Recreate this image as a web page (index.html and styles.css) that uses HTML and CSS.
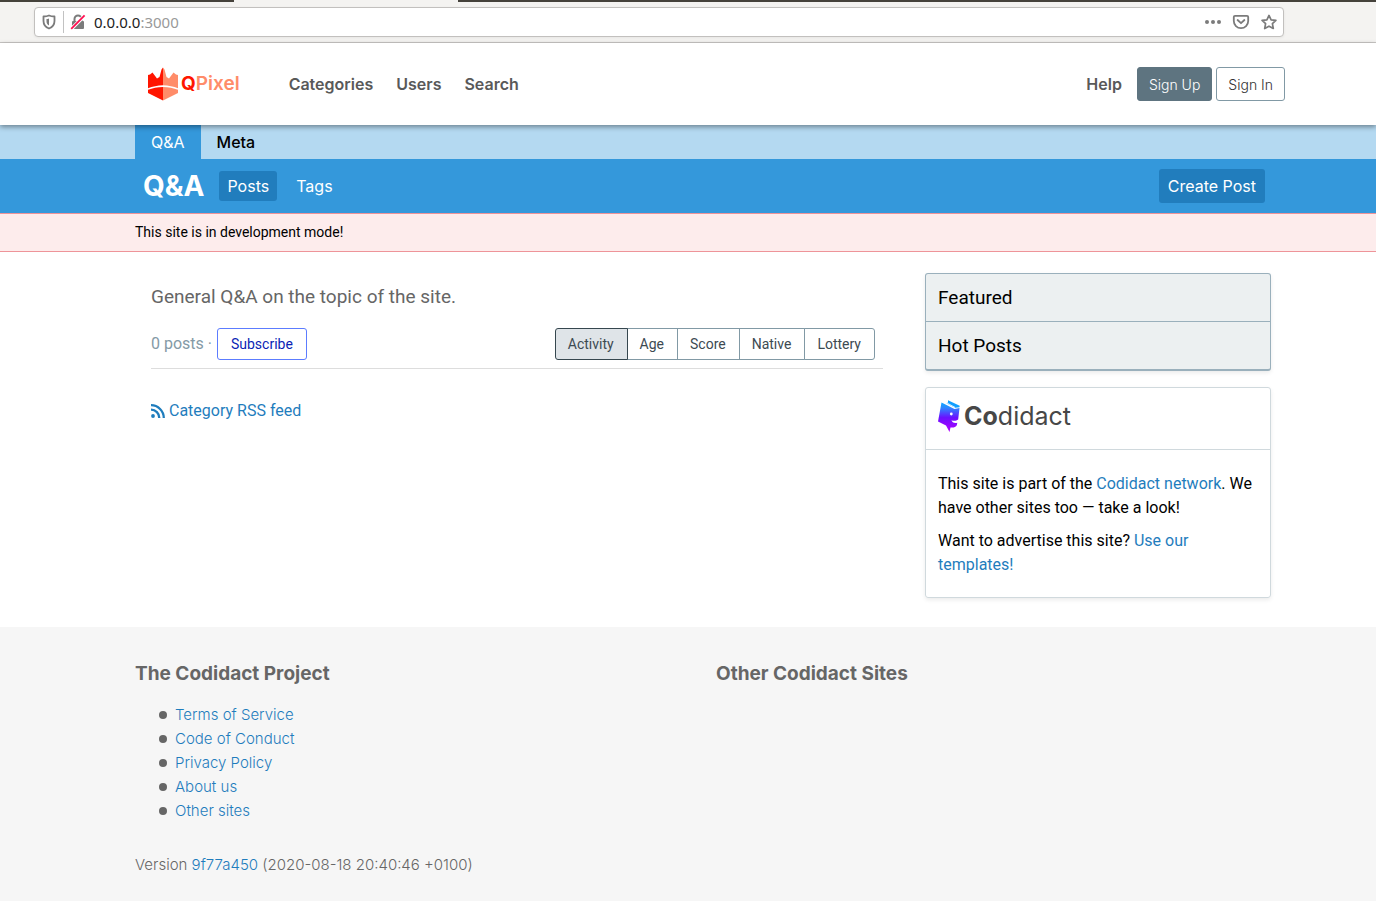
FILE: index.html
```html
<!DOCTYPE html>
<html lang="en">
<head>
<meta charset="utf-8">
<title>Q&amp;A - QPixel</title>
<meta name="viewport" content="width=device-width, initial-scale=1">
<link rel="stylesheet" href="styles.css">
</head>
<body>
<div class="browser">
  <div class="tabstrip"><span class="tabstrip-left"></span><span class="tabstrip-active"></span><span class="tabstrip-right"></span></div>
  <div class="urlbar">
    <svg class="shield" width="14" height="16" viewBox="0 0 14 16"><path d="M7 1.500C5.200 2.300 3.300 2.500 1.500 2.500V7c0 3.500 2 6.200 5.500 7.500C10.500 13.200 12.500 10.500 12.500 7V2.500C10.700 2.500 8.800 2.300 7 1.500z" fill="none" stroke="#7b7b7b" stroke-width="1.800" stroke-linejoin="round"/><path d="M7 4.500c-1 .4-1.700.5-2.500.6V7.500c0 1.700.8 3 2.500 4z" fill="#7b7b7b"/></svg>
    <span class="urlbar-rule"></span>
    <svg class="lock" width="16" height="16" viewBox="0 0 16 16"><rect x="2" y="7" width="12" height="8" rx="1" fill="#7b7b7b"/><path d="M4.500 7V5a3.500 3.500 0 0 1 7 0v2" fill="none" stroke="#7b7b7b" stroke-width="2"/><path d="M1 15.200L14.800 1.400" stroke="#fff" stroke-width="3.600"/><path d="M1.200 14.800L14.600 1.400" stroke="#ff0d4f" stroke-width="1.800"/></svg>
    <span class="url"><span class="host">0.0.0.0</span>:3000</span>
    <svg class="more" width="18" height="16" viewBox="0 0 18 16" fill="#7b7b7b"><circle cx="3" cy="8" r="2"/><circle cx="9" cy="8" r="2"/><circle cx="15" cy="8" r="2"/></svg>
    <svg class="pocket" width="18" height="16" viewBox="0 0 18 16" fill="none" stroke="#7b7b7b" stroke-width="1.800" stroke-linejoin="round" stroke-linecap="round"><path d="M3 1.900h12a1.200 1.200 0 0 1 1.200 1.200V7a7.200 7.200 0 0 1-14.400 0V3.100A1.200 1.200 0 0 1 3 1.900z"/><path d="M5.600 6L9 9.200 12.400 6"/></svg>
    <svg class="star" width="16" height="16" viewBox="0 0 16 16"><path d="M8 1.400l2.100 4.400 4.800.6-3.500 3.300.9 4.800L8 12.200l-4.300 2.300.9-4.800L1.100 6.400l4.800-.6z" fill="none" stroke="#7b7b7b" stroke-width="1.700" stroke-linejoin="round"/></svg>
  </div>
</div>

<header class="header">
  <div class="container header-row">
    <a class="logo" href="#" aria-label="QPixel">
      <svg width="32" height="34" viewBox="0 0 32 34"><path d="M1 8l2-.5L5.500 5.500 10 11.500 12.500 10 14.500 2.500 16 .5v17.800C10.500 18.500 5.500 19.500 1 21.300z" fill="#ff1500"/><path d="M16 .5l1.500 2L19.500 10 22 11.500 26.500 5.500 29 7.500l2 .5v13.300c-4.500-1.800-9.500-2.800-15-3z" fill="#ff8c69"/><path d="M1 22.800c4.500-1.800 9.500-2.800 15-2.900V33.500L1 26z" fill="#ff1500"/><path d="M31 22.800c-4.500-1.800-9.500-2.800-15-2.900V33.500L31 26z" fill="#ff8c69"/></svg>
      <span class="logo-text"><span class="logo-q">Q</span>Pixel</span>
    </a>
    <nav class="main-nav"><a href="#">Categories</a><a href="#">Users</a><a href="#">Search</a></nav>
    <div class="account"><a class="help" href="#">Help</a><button class="button sign-up" type="button">Sign Up</button><button class="button sign-in" type="button">Sign In</button></div>
  </div>
</header>

<nav class="category-tabs"><div class="container tabs-row"><a class="tab is-active" href="#">Q&amp;A</a><a class="tab" href="#">Meta</a></div></nav>

<div class="category-header">
  <div class="container category-row">
    <h1 class="category-title">Q&amp;A</h1>
    <a class="category-link is-active" href="#">Posts</a>
    <a class="category-link" href="#">Tags</a>
    <a class="create-post" href="#">Create Post</a>
  </div>
</div>

<div class="notice"><div class="container">This site is in development mode!</div></div>

<div class="container page">
  <main class="main">
    <p class="lead">General Q&amp;A on the topic of the site.</p>
    <div class="toolbar">
      <span class="count">0 posts ·</span>
      <button class="subscribe" type="button">Subscribe</button>
      <div class="sorts"><button class="sort is-active" type="button">Activity</button><button class="sort" type="button">Age</button><button class="sort" type="button">Score</button><button class="sort" type="button">Native</button><button class="sort" type="button">Lottery</button></div>
    </div>
    <a class="rss" href="#"><svg width="14" height="14" viewBox="0 0 14 14"><circle cx="2" cy="12" r="1.900" fill="#1f7dbd"/><path d="M0 5.700A8.200 8.200 0 0 1 8.300 14M0 1.200A12.800 12.800 0 0 1 12.800 14" fill="none" stroke="#1f7dbd" stroke-width="2.300"/></svg>Category RSS feed</a>
  </main>
  <aside class="sidebar">
    <section class="widget is-grey"><h2 class="widget-title">Featured</h2><h2 class="widget-title">Hot Posts</h2></section>
    <section class="widget">
      <div class="widget-logo">
        <svg width="22" height="32" viewBox="0 0 22 32"><defs><linearGradient id="book" gradientUnits="userSpaceOnUse" x1="10" y1="0" x2="10" y2="32"><stop offset="0" stop-color="#00b7ff"/><stop offset=".25" stop-color="#2f86ff"/><stop offset=".55" stop-color="#6a10ff"/><stop offset="1" stop-color="#b400ff"/></linearGradient></defs><path d="M3.500 2.500L16.500 9 21.500 8 20.200 19.500c-2 1.600-4.500 1.700-6.700.8.500 2 2.500 3.200 5.800 2.500l-.5 2.500c-1 2-3.500 2.600-6.300 2.200L11.500 32 8 25.500 0 21.500z" fill="url(#book)"/><path d="M10 .3L21.700 5.800 21.500 7.200 17 7.800 8.500 3.200 10 2.500z" fill="#109fff"/><path d="M8.300 2.600L17 7.400" stroke="#fff" stroke-width=".8"/><circle cx="13.300" cy="14" r="1.400" fill="#fff"/></svg>
        <span class="codidact"><b>Co</b>didact</span>
      </div>
      <div class="widget-body"><p>This site is part of the <a href="#">Codidact network</a>. We have other sites too — take a look!</p><p>Want to advertise this site? <a href="#">Use our templates!</a></p></div>
    </section>
  </aside>
</div>

<footer class="footer">
  <div class="container footer-grid">
    <div>
      <h2 class="footer-title">The Codidact Project</h2>
      <ul class="footer-links"><li><a href="#">Terms of Service</a></li><li><a href="#">Code of Conduct</a></li><li><a href="#">Privacy Policy</a></li><li><a href="#">About us</a></li><li><a href="#">Other sites</a></li></ul>
      <p class="version">Version <a href="#">9f77a450</a> (2020-08-18 20:40:46 +0100)</p>
    </div>
    <div><h2 class="footer-title">Other Codidact Sites</h2></div>
  </div>
</footer>
</body>
</html>
```
FILE: styles.css
```css
* { box-sizing: border-box; }
body {
  margin: 0;
  background: #fff;
  color: #000;
  font: 16px/24px Roboto, sans-serif;
}
a { color: #1f7dbd; text-decoration: none; }
h1, h2, p, ul { margin: 0; }
button { font-family: inherit; cursor: pointer; }
svg { flex: none; display: block; }
.container { max-width: 1190px; margin: 0 auto; padding: 0 12px 0 42px; }

.browser { background: #f4f3f1; border-bottom: 1px solid #c9c7c5; }
.tabstrip { display: flex; height: 2px; }
.tabstrip-left { flex: 0 0 17%; background: #45423b; }
.tabstrip-active { flex: 0 0 224px; }
.tabstrip-right { flex: 1; background: #45423b; }
.urlbar {
  display: flex;
  align-items: center;
  height: 30px;
  margin: 5px 92px 5px 34px;
  padding: 0 6px 0 7px;
  background: #fff;
  border: 1px solid #c2c0be;
  border-radius: 4px;
  box-shadow: 0 1px 3px rgba(0, 0, 0, .06);
}
.urlbar-rule { width: 1px; height: 22px; margin: 0 6px 0 7px; background: #c2c2c2; }
.url { flex: 1; margin-left: 8px; color: #999; font: 15px/20px "Noto Sans", sans-serif; }
.host { color: #222; }
.pocket { margin: 0 11px 0 10px; }

.header { position: relative; background: #fff; box-shadow: 0 2px 5px rgba(0, 0, 0, .4); }
.header-row {
  display: flex;
  align-items: center;
  min-height: 82px;
  max-width: 1194px;
  padding-right: 0;
  padding-left: 56px;
  font-family: Inter, sans-serif;
}
.logo { display: flex; align-items: center; }
.logo-text { margin-left: 2px; color: #ff8c69; font-size: 19px; font-weight: 600; }
.logo-q { color: #ff1500; font-weight: 700; }
.main-nav { display: flex; gap: 23px; margin-left: 49px; }
.main-nav a, .help { color: #595959; font-size: 16px; font-weight: 600; }
.account { display: flex; align-items: center; margin-left: auto; }
.button { height: 34px; padding: 0 11px; border: 1px solid #5e7480; border-radius: 3px; font-size: 14px; font-weight: 300; }
.sign-up { margin: 0 4px 0 15px; background: #5e7480; color: #fff; }
.sign-in { background: #fff; border-color: #8199a5; color: #333; }

.category-tabs { background: #b4d9f1; font-family: Inter, sans-serif; }
.tabs-row { display: flex; }
.tab { padding: 5px 16px; color: #000; font-size: 16px; font-weight: 500; }
.tab.is-active { background: #3498db; color: #fff; font-weight: 400; }
.category-header { background: #3498db; color: #fff; font-family: Inter, sans-serif; }
.category-row { display: flex; align-items: center; min-height: 54px; padding-left: 50px; padding-right: 18px; }
.category-title { margin-right: 15px; font-size: 28px; line-height: 32px; font-weight: 700; }
.category-link { margin-right: 11px; padding: 3px 8px; border-radius: 3px; color: #fff; font-size: 16px; }
.category-link.is-active { background: #217dbd; }
.create-post { margin-left: auto; padding: 5px 9px; background: #217dbd; border-radius: 3px; color: #fff; font-size: 16px; }
.notice { padding: 6px 0 7px; background: #fdecec; border: solid #ee9499; border-width: 1px 0; font-size: 14px; }

.page { display: grid; grid-template-columns: minmax(0, 1fr) 346px; gap: 42px; padding: 21px 12px 29px 58px; }
.main { padding-top: 11px; }
.lead { color: #666; font-size: 19px; line-height: 25px; }
.toolbar { display: flex; align-items: center; margin: 19px 0 30px; padding: 0 8px 8px 0; border-bottom: 1px solid #ddd; }
.count { color: #849aa6; }
.subscribe { height: 32px; margin-left: 5px; padding: 0 13px; background: #fff; border: 1px solid #5c7cff; border-radius: 3px; color: #0a1fb5; font-size: 14px; }
.sorts { display: flex; margin-left: auto; }
.sort { height: 32px; margin-left: -1px; padding: 0 13px 0 12px; background: #fff; border: 1px solid #8199a5; color: #3d4a52; font-size: 14px; }
.sort:first-child { border-radius: 3px 0 0 3px; }
.sort:last-child { border-radius: 0 3px 3px 0; }
.sort.is-active { position: relative; background: #dfe4e8; border-color: #36474f; }
.rss { display: inline-flex; align-items: center; gap: 4px; }

.sidebar { display: grid; gap: 16px; align-content: start; }
.widget { border: 1px solid #d0d9dd; border-radius: 3px; box-shadow: 0 2px 4px rgba(0, 0, 0, .08); }
.widget.is-grey { background: #ecf0f1; border-color: #9ab0bc; border-bottom-width: 2px; }
.widget-title { padding: 12px 12px 11px; font-size: 19px; line-height: 24px; font-weight: 400; }
.widget-title + .widget-title { border-top: 1px solid #9ab0bc; }
.widget-logo { display: flex; align-items: center; gap: 4px; padding: 12px 12px 17px; border-bottom: 1px solid #d0d9dd; }
.codidact { color: #474747; font: 25px/32px Inter, sans-serif; }
.widget-body { padding: 22px 12px 20px; }
.widget-body p + p { margin-top: 9px; }

.footer { padding: 33px 0 24px; background: #f6f6f6; color: #666; font-family: Inter, sans-serif; font-weight: 300; }
.footer-grid { display: grid; grid-template-columns: 1fr 1fr; gap: 26px; }
.footer-title { font-size: 19px; line-height: 28px; font-weight: 700; }
.footer-links { margin: 15px 0 30px; padding-left: 24px; font-size: 15px; list-style: none; }
.footer-links li { display: flex; align-items: center; gap: 8px; }
.footer-links li::before { content: ""; width: 8px; height: 8px; border-radius: 50%; background: #666; }
.version { font-size: 15px; }
```
